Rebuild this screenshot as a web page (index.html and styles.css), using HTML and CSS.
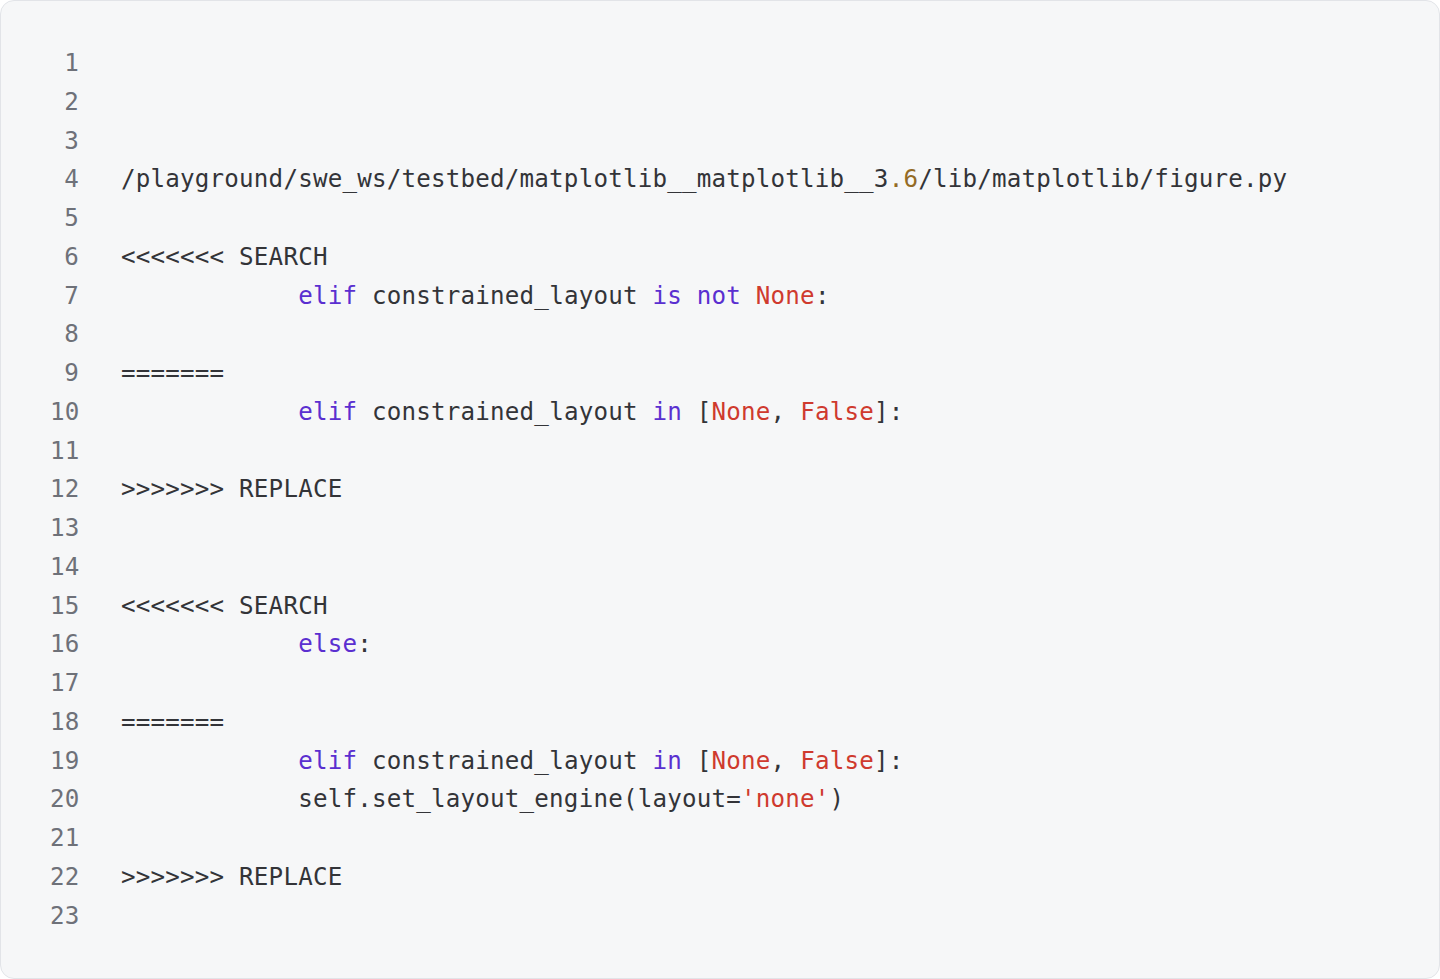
FILE: index.html
```html
<!DOCTYPE html>
<html lang="en">
<head>
<meta charset="utf-8">
<title>Code</title>
<link rel="stylesheet" href="styles.css">
</head>
<body>
<div class="card">
  <div class="code">
    <div class="line"><span class="ln">1</span><span class="src"></span></div>
    <div class="line"><span class="ln">2</span><span class="src"></span></div>
    <div class="line"><span class="ln">3</span><span class="src"></span></div>
    <div class="line"><span class="ln">4</span><span class="src">/playground/swe_ws/testbed/matplotlib__matplotlib__3<span class="num">.6</span>/lib/matplotlib/figure.py</span></div>
    <div class="line"><span class="ln">5</span><span class="src"></span></div>
    <div class="line"><span class="ln">6</span><span class="src">&lt;&lt;&lt;&lt;&lt;&lt;&lt; SEARCH</span></div>
    <div class="line"><span class="ln">7</span><span class="src">            <span class="kw">elif</span> constrained_layout <span class="kw">is</span> <span class="kw">not</span> <span class="lit">None</span>:</span></div>
    <div class="line"><span class="ln">8</span><span class="src"></span></div>
    <div class="line"><span class="ln">9</span><span class="src">=======</span></div>
    <div class="line"><span class="ln">10</span><span class="src">            <span class="kw">elif</span> constrained_layout <span class="kw">in</span> [<span class="lit">None</span>, <span class="lit">False</span>]:</span></div>
    <div class="line"><span class="ln">11</span><span class="src"></span></div>
    <div class="line"><span class="ln">12</span><span class="src">&gt;&gt;&gt;&gt;&gt;&gt;&gt; REPLACE</span></div>
    <div class="line"><span class="ln">13</span><span class="src"></span></div>
    <div class="line"><span class="ln">14</span><span class="src"></span></div>
    <div class="line"><span class="ln">15</span><span class="src">&lt;&lt;&lt;&lt;&lt;&lt;&lt; SEARCH</span></div>
    <div class="line"><span class="ln">16</span><span class="src">            <span class="kw">else</span>:</span></div>
    <div class="line"><span class="ln">17</span><span class="src"></span></div>
    <div class="line"><span class="ln">18</span><span class="src">=======</span></div>
    <div class="line"><span class="ln">19</span><span class="src">            <span class="kw">elif</span> constrained_layout <span class="kw">in</span> [<span class="lit">None</span>, <span class="lit">False</span>]:</span></div>
    <div class="line"><span class="ln">20</span><span class="src">            self.set_layout_engine(layout=<span class="lit">'none'</span>)</span></div>
    <div class="line"><span class="ln">21</span><span class="src"></span></div>
    <div class="line"><span class="ln">22</span><span class="src">&gt;&gt;&gt;&gt;&gt;&gt;&gt; REPLACE</span></div>
    <div class="line"><span class="ln">23</span><span class="src"></span></div>
  </div>
</div>
</body>
</html>
```

FILE: styles.css
```css
html, body {
  margin: 0;
  padding: 0;
  background: #ffffff;
}

.card {
  box-sizing: border-box;
  width: 1440px;
  height: 979px;
  background: #f6f7f8;
  border: 1px solid #e2e4e8;
  border-radius: 14px;
  padding: 43px 0 0 49px;
  overflow: hidden;
}

.code {
  display: flex;
  flex-direction: column;
  font-family: "DejaVu Sans Mono", "Liberation Mono", monospace;
  font-size: 24.2px;
  line-height: 38.75px;
  letter-spacing: 0.2px;
  color: #333438;
}

.line {
  display: flex;
  height: 38.75px;
}

.ln {
  width: 29px;
  flex: none;
  text-align: right;
  color: #6e7179;
  margin-right: 42px;
}

.src {
  white-space: pre;
}

.kw {
  color: #5a2fd0;
}

.lit {
  color: #cf3a2e;
}

.num {
  color: #946b25;
}
```
